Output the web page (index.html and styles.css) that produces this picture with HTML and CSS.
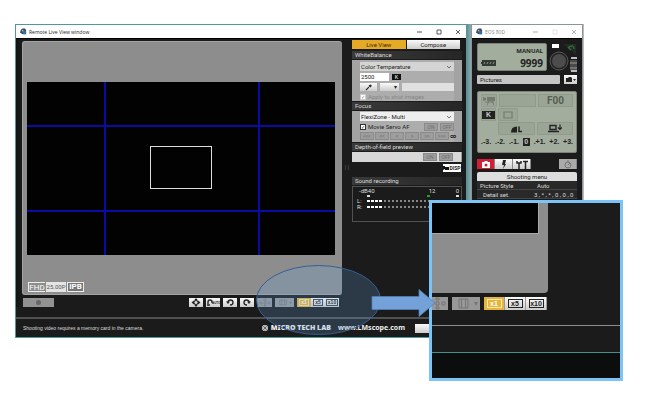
FILE: index.html
```html
<!DOCTYPE html>
<html lang="en">
<head>
<meta charset="utf-8">
<title>Remote Live View window</title>
<link rel="stylesheet" href="styles.css">
</head>
<body>
<main class="desktop">
  <div class="wallpaper"></div>

  <section class="window live">
    <header class="titlebar">
      <svg class="app-icon" viewBox="0 0 8 8"><path d="M1 2L3 .5H6L7 3V7H3L0 5Z" fill="#3c4654"/><circle cx="5" cy="5" r="2" fill="#2876ba"/><circle cx="3" cy="3" r="1" fill="#aab4c0"/></svg>
      <span class="caption">Remote Live View window</span>
      <svg class="controls" viewBox="0 0 44 8"><path d="M0 4H5M20 2H24V6H20ZM39 2L43 6M43 2L39 6" fill="none" stroke="#333" stroke-width=".8"/></svg>
    </header>
    <div class="workspace">
      <div class="left">
        <div class="viewer">
          <div class="picture">
            <i class="grid-v first"></i><i class="grid-v last"></i><i class="grid-h first"></i><i class="grid-h last"></i>
            <i class="focus-frame"></i>
          </div>
          <div class="badges"><span class="fhd">FHD</span><span class="rate">25.00P</span><span class="ipb">IPB</span></div>
        </div>
        <div class="toolbar">
          <button class="record" aria-label="Record"><i class="dot"></i></button>
          <button class="tool" aria-label="Move"><svg viewBox="0 0 14 9"><path d="M7 0L5 2.500H9ZM7 9L5 6.500H9ZM2.500 4.500L5 2.500V6.500ZM11.500 4.500L9 2.500V6.500Z" fill="#222"/><circle cx="7" cy="4.500" r="2" fill="#ddd" stroke="#222"/></svg></button>
          <button class="tool" aria-label="Auto rotate"><svg viewBox="0 0 14 9"><path d="M2 6V4Q2 2 4 2Q6 2 6 4V5M1 7H4" fill="none" stroke="#222" stroke-width="1.400"/></svg><span class="auto">AUTO</span></button>
          <button class="tool" aria-label="Rotate left"><svg viewBox="0 0 14 9"><path d="M5 4Q5 2 7.500 2Q10 2 10 4.500Q10 7 7 7" fill="none" stroke="#222" stroke-width="1.300"/><path d="M3 3.500H7L5 6Z" fill="#222"/></svg></button>
          <button class="tool" aria-label="Rotate right"><svg viewBox="0 0 14 9"><path d="M9 4Q9 2 6.500 2Q4 2 4 4.500Q4 7 7 7" fill="none" stroke="#222" stroke-width="1.300"/><path d="M11 3.500H7L9 6Z" fill="#222"/></svg></button>
          <button class="tool off points-btn" aria-label="Focus points"><svg viewBox="0 0 14 9"><path d="M6 1H8V3H6ZM6 4H8V6H6ZM6 7H8V8H6ZM2 4H4V6H2ZM10 4H12V6H10Z" fill="none" stroke="#777" stroke-width=".7"/></svg></button>
          <button class="tool off wide" aria-label="Aspect"><svg viewBox="0 0 20 9"><path d="M5 2H12V7H5ZM7 2V7M10 2V7" fill="none" stroke="#777" stroke-width=".8"/><path d="M15 4H18L16.500 6Z" fill="#777"/></svg></button>
          <div class="zoomset"><button class="z on"><span>x1</span></button><button class="z"><span>x5</span></button><button class="z"><span>x10</span></button></div>
        </div>
      </div>
      <i class="grip"></i>
      <div class="side">
        <nav class="tabs"><button class="tab active">Live View</button><button class="tab">Compose</button></nav>
        <h2 class="heading">WhiteBalance</h2>
        <div class="panel wb">
          <div class="dropdown"><select aria-label="White balance mode"><option>Color Temperature</option></select><svg viewBox="0 0 6 4"><path d="M1 1L3 3L5 1" fill="none" stroke="#555" stroke-width=".8"/></svg></div>
          <div class="line"><input class="kelvin" aria-label="Kelvin" value="2500"><span class="k">K</span></div>
          <div class="line"><button class="pick" aria-label="Pick colour"><svg viewBox="0 0 8 8"><path d="M1 7L4.500 3.500" stroke="#222" stroke-width="1.300"/><path d="M4 2L6 4L7.500 2.500Q8 .5 6 .5Z" fill="#222"/></svg></button><button class="arrow-btn" aria-label="Colour menu">▾</button><i class="swatch"></i></div>
          <label class="check dim"><input type="checkbox" checked disabled>Apply to shot images</label>
        </div>
        <h2 class="heading">Focus</h2>
        <div class="panel focus">
          <div class="dropdown"><select aria-label="Focus mode"><option>FlexiZone - Multi</option></select><svg viewBox="0 0 6 4"><path d="M1 1L3 3L5 1" fill="none" stroke="#555" stroke-width=".8"/></svg></div>
          <div class="line between"><label class="check"><input type="checkbox" checked>Movie Servo AF</label><span class="onoff"><button disabled>ON</button><button disabled>OFF</button></span></div>
          <div class="steps"><button disabled>&lt;&lt;&lt;</button><button disabled>&lt;&lt;</button><button disabled>&lt;</button><button disabled>&gt;</button><button disabled>&gt;&gt;</button><button disabled>&gt;&gt;&gt;</button><span>∞</span></div>
        </div>
        <h2 class="heading">Depth-of-field preview</h2>
        <div class="dof"><span class="onoff"><button disabled>ON</button><button disabled>OFF</button></span></div>
        <button class="disp"><svg viewBox="0 0 6 5"><path d="M0 0H2V1H6V4H2V3L0 4Z" fill="#111"/></svg>DISP</button>
        <h2 class="heading sound">Sound recording</h2>
        <div class="meter">
          <div class="scale"><span>-dB40</span><span class="mid">12</span><span>0</span></div>
          <div class="marks"><i></i><i class="green"></i><i></i></div>
          <div class="level"><span>L:</span><i class="dots lit"></i><i class="dots"></i></div>
          <div class="level"><span>R:</span><i class="dots lit"></i><i class="dots"></i></div>
        </div>
      </div>
    </div>
    <footer class="status">
      <span>Shooting video requires a memory card in the camera.</span>
      <span class="brand"><svg viewBox="0 0 8 8"><circle cx="4" cy="4" r="3" fill="#eee"/><path d="M4 1V7M1 4H7M2 2L6 6M6 2L2 6" stroke="#444" stroke-width=".6"/></svg><b>MICRO TECH LAB</b><a href="#">www.LMscope.com</a></span>
      <button class="quit" aria-label="Quit"></button>
    </footer>
  </section>

  <section class="window camera">
    <header class="titlebar">
      <svg class="app-icon" viewBox="0 0 8 8"><path d="M1 2L3 .5H6L7 3V7H3L0 5Z" fill="#3c4654"/><circle cx="5" cy="5" r="2" fill="#2876ba"/><circle cx="3" cy="3" r="1" fill="#aab4c0"/></svg>
      <span class="caption faded">EOS 80D</span>
      <svg class="controls" viewBox="0 0 44 8"><path d="M0 4H5M39 2L43 6M43 2L39 6" fill="none" stroke="#999" stroke-width=".8"/><path d="M20 2H24V6H20Z" fill="none" stroke="#ddd" stroke-width=".8"/></svg>
    </header>
    <div class="cambody">
      <div class="top">
        <div class="lcd small"><span>MANUAL</span><div><svg class="battery" viewBox="0 0 15 6"><path d="M1 2H0V4H1V6H15V0H1Z" fill="#333a33"/><path d="M3 4L4 2M6 4L7 2M9 4L10 2M12 4L13 2" stroke="#a3ab98" stroke-width=".8"/></svg><b>9999</b></div></div>
        <svg class="dial" viewBox="0 0 30 30"><path d="M5 1H12V5H5Z" fill="#fff"/><circle cx="12" cy="18" r="9" fill="#222" stroke="#666" stroke-width=".8"/><circle cx="12" cy="18" r="7" fill="#4c4c4c"/><path d="M16 1H29V12Z" fill="#242924"/><path d="M22 4Q27 1 27 6M21 4L24 7" fill="none" stroke="#287a38" stroke-width="1.300"/><path d="M23 17H30V28H23Z" fill="#4a4a4a"/><path d="M23 20H30M23 25H30" stroke="#999"/><path d="M24 14H30V16H24ZM24 27H30V29H24Z" fill="#bbb"/></svg>
      </div>
      <div class="dest"><button class="folder">Pictures</button><button class="cam-btn" aria-label="Capture target"><svg viewBox="0 0 13 9"><path d="M2 3H4L5 2H7L8 3V7H2Z" fill="#222"/><path d="M9 4H12L10.500 6Z" fill="#222"/></svg></button></div>
      <div class="lcd large">
        <div class="cells three"><span><svg viewBox="0 0 14 10"><path d="M5 1H13V5H5ZM1 1L4 2V4L1 5Z" fill="#737b6e"/><path d="M7 5L5 9M10 5L12 9M3 6H12" stroke="#737b6e"/></svg></span><span class="wide"></span><span class="fnum">F00</span></div>
        <div class="cells two"><span><em>K</em></span><span><svg viewBox="0 0 14 10"><path d="M3 2H11V8H3Z" fill="none" stroke="#747d6f" stroke-width="1.200"/></svg></span></div>
        <div class="cells quality"><span><svg viewBox="0 0 14 9"><path d="M2 8Q2 2 8 2V8Z" fill="#222"/><path d="M10 2V7H13" fill="none" stroke="#222" stroke-width="1.500"/></svg></span><span><svg viewBox="0 0 14 9"><path d="M2 1H8V5H2ZM0 7H11" fill="none" stroke="#222" stroke-width="1.400"/><path d="M12 0V4M10 3L12 5L14 3" fill="none" stroke="#222" stroke-width="1.200"/></svg></span></div>
        <div class="ev"><span>.-3.</span><span>.-2.</span><span>.-1.</span><em>0</em><span>.+1.</span><span>+2.</span><span>+3.</span></div>
      </div>
      <div class="camtabs">
        <button class="red" aria-label="Shooting"><svg viewBox="0 0 14 9"><path d="M3 2H5L6 1H8L9 2H11V8H3Z" fill="#fff"/><circle cx="7" cy="5" r="1.500" fill="#d12035"/></svg></button>
        <button aria-label="Flash"><svg viewBox="0 0 14 9"><path d="M6 0H9L8 4H9L6 9L7 5H5Z" fill="#222"/></svg></button>
        <button aria-label="Set-up"><svg viewBox="0 0 14 9"><path d="M2 1V3H6V1M4 3V9M8 1.500H13M10.500 1V9" fill="none" stroke="#222" stroke-width="1.500"/></svg></button>
        <button class="timer" aria-label="Timer"><svg viewBox="0 0 14 9"><circle cx="7" cy="5" r="3" fill="none" stroke="#777"/><path d="M7 0V2M7 5L9 3" stroke="#777"/></svg></button>
      </div>
      <div class="menu-title">Shooting menu</div>
      <dl class="menu"><div><dt>Picture Style</dt><dd>Auto</dd></div><div class="sub"><dt>Detail set.</dt><dd class="wide">3 , * , * , 0 , 0 , 0</dd></div></dl>
    </div>
  </section>

  <section class="inset">
    <div class="crop"><div class="black"></div></div>
    <div class="inset-tools">
      <button class="off points" aria-label="Focus points"><svg viewBox="0 0 16 13"><path d="M4 1H7V3H4ZM4 5H7V8H4ZM4 10H7V12H4ZM10 5H13V8H10Z" fill="none" stroke="#757575"/></svg></button>
      <button class="off aspect" aria-label="Aspect"><svg viewBox="0 0 28 13"><path d="M7 2H16V11H7ZM9.500 2V11M13.500 2V11" fill="none" stroke="#757575"/><path d="M22 5H26L24 9Z" fill="#757575"/></svg></button>
      <button class="big on"><span>x1</span></button><button class="big"><span>x5</span></button><button class="big"><span>x10</span></button>
    </div>
    <div class="foot"></div>
    <div class="under"></div>
  </section>

  <svg class="callout" viewBox="0 0 180 72"><ellipse cx="62.500" cy="36" rx="62" ry="34.500" fill="#6aa4e0" fill-opacity=".22" stroke="#365f91" stroke-width="1"/><path d="M116 32.500H163V25.500L179 39L163 52.500V45.500H116Z" fill="#74a2d8" stroke="#527fb5" stroke-width=".8"/></svg>
</main>
</body>
</html>
```
FILE: styles.css
```css
* { box-sizing: border-box; }
body { margin: 0; background: #fff; font: 6px/8px Roboto, "Liberation Sans", sans-serif; color: #222; }
button, input, select { font: inherit; color: inherit; margin: 0; padding: 0; border: 0; border-radius: 0; }
button { display: flex; align-items: center; justify-content: center; background: linear-gradient(#fafafa, #ccc); overflow: hidden; }
button svg { width: 14px; height: 9px; flex: none; }
i { display: block; font-style: normal; }
em { font-style: normal; }
.desktop { position: relative; min-height: 404px; overflow: hidden; }
.wallpaper { position: absolute; right: 66px; top: 24px; width: 119px; height: 180px; background: linear-gradient(90deg, #477d82, #86a5aa 5px, #bbb); }

/* Windows */
.window { position: absolute; top: 24px; background: #1b1b1b; border: 1px solid #50999b; }
.live { left: 15px; right: 183px; }
.camera { right: 67px; width: 112px; height: 181px; border-color: #8b9698; overflow: hidden; }
.titlebar { display: flex; align-items: center; height: 13px; padding: 0 3px 0 4px; background: #fff; font: 5px/12px "Open Sans", sans-serif; }
.app-icon { width: 7px; height: 7px; margin-right: 2px; }
.caption { flex: 1; white-space: nowrap; }
.faded { color: #888; }
.controls { width: 44px; height: 8px; margin-right: 2px; }
.workspace { position: relative; display: grid; grid-template-columns: 1fr 110px; gap: 10px; padding: 2px 4px 0 6px; border-top: 1px solid #000; background: linear-gradient(90deg, #111, #1b1b1b 5px); }

/* Viewer */
.viewer { height: 254px; padding: 40px 7px 0 4px; background: #8d8d8d; border: 1px solid #a3a3a3; border-width: 1px 0 1px 1px; border-radius: 3px; }
.picture { position: relative; height: 173px; background: #020202; }
.grid-v, .grid-h, .focus-frame { position: absolute; background: #0a0aa5; }
.grid-v { top: 0; bottom: 0; width: 2px; }
.grid-h { left: 0; right: 0; height: 2px; }
.grid-v.first { left: 25%; }
.grid-v.last { left: 75%; }
.grid-h.first { top: 25%; }
.grid-h.last { top: 74%; }
.focus-frame { left: 40%; right: 40%; top: 37%; bottom: 38%; background: none; border: 1px solid #ddd; }
.badges { display: flex; align-items: center; gap: 1px; margin: 27px 0 0 1px; height: 10px; color: #555; }
.badges span { height: 10px; overflow: hidden; line-height: 10px; text-align: center; }
.badges .fhd { width: 17px; border: 1px solid #eee; border-right: 0; color: #fff; font-size: 8px; }
.badges .rate { width: 20px; background: #e4e4e4; }
.badges .ipb { width: 17px; border: 1px solid #eee; color: #fff; background: #777; font: bold 8px/8px Roboto, sans-serif; }

/* Viewer toolbar */
.toolbar { display: flex; gap: 3px; height: 9px; margin-top: 3px; padding-right: 3px; }
.record { width: 31px; margin: 0 auto 0 1px; background: #929292; }
.dot { width: 5px; height: 5px; border-radius: 50%; background: #666; }
.tool { width: 14px; position: relative; }
.off { background: #989898; }
.points-btn { width: 15px; }
.wide { width: 19px; }
.tool.wide svg { width: 19px; }
.auto { position: absolute; left: 6px; top: 3px; font: bold 3px/4px "Liberation Sans", sans-serif; }
.zoomset { display: flex; }
.z { width: 14px; }
.z span { border: 1px solid #444; padding: 0 1px; font: bold 5px/5px "Liberation Sans", sans-serif; }
.on { background: #e5b43a; color: #fff; }
.z.on span { border-color: #f8dfa0; }

/* Settings column */
.grip { position: absolute; right: 117px; top: 126px; width: 4px; height: 5px; border: solid #3a3a3a; border-width: 0 1px; }
.tabs { display: grid; grid-template-columns: 1fr 1fr; gap: 1px; height: 9px; margin: -1px 2px 2px 0; }
.tab.active { background: #e6aa26; color: #3b2d12; }
.heading { margin: 0 0 1px; height: 8px; padding-left: 3px; font: 6px/8px Roboto, "Liberation Sans", sans-serif; color: #ddd; background: linear-gradient(90deg, #3a3a3a, #262626); }
.panel { display: flex; flex-direction: column; gap: 2px; margin-bottom: 1px; background: #adadad; border-left: 8px solid #a3a3a3; border-right: 8px solid #a3a3a3; }
.wb { height: 41px; padding-top: 2px; }
.focus { height: 31px; padding-top: 1px; gap: 1px; }
.dropdown { position: relative; display: grid; height: 9px; }
.dropdown select { appearance: none; width: 100%; height: 9px; background: #d4d4d4; padding-left: 1px; }
.focus select { background: #eee; }
.dropdown svg { position: absolute; right: 2px; top: 3px; width: 6px; height: 4px; }
.line { display: flex; gap: 3px; height: 8px; align-items: center; }
.kelvin { width: 29px; height: 8px; padding-left: 1px; background: #fff; }
.k { width: 9px; height: 6px; font: bold 5px/6px "Liberation Sans", sans-serif; color: #ccc; background: #111; text-align: center; }
.pick { width: 17px; height: 8px; }
.pick svg { width: 7px; height: 7px; }
.arrow-btn { width: 19px; height: 8px; padding-left: 12px; }
.swatch { flex: 1; height: 8px; background: #e0e0e0; }
.check { display: flex; align-items: center; gap: 2px; white-space: nowrap; height: 8px; }
.check input { appearance: none; display: grid; place-items: center; width: 6px; height: 6px; border: 1px solid #333; background: #fff; }
.check input:checked::after { content: "✓"; font: 5px/4px "DejaVu Sans", sans-serif; }
.dim { color: #868686; }
.dim input { border-color: #ccc; }
.between { justify-content: space-between; height: 9px; }
.onoff { display: flex; gap: 2px; }
.onoff button, .steps button { width: 14px; height: 8px; background: #9d9d9d; border: 1px solid #8a8a8a; color: #6c6c6c; font-size: 5px; line-height: 6px; }
.steps { display: flex; gap: 1px; align-items: center; }
.focus .steps { margin-right: -4px; }
.steps span { font-weight: bold; }
.dof { display: flex; justify-content: flex-end; height: 10px; padding: 1px 8px; background: #d8d8d8; border-right: 1px solid #999; }
.disp { width: 18px; height: 8px; margin: 2px 1px 5px auto; background: #fff; font: bold 5px/7px Roboto, sans-serif; }
.disp svg { width: 6px; height: 5px; }
.meter { height: 36px; padding: 0 2px; border: 1px solid #515151; color: #ddd; }
.scale, .marks { display: flex; justify-content: space-between; height: 8px; padding-left: 4px; }
.scale .mid { margin-left: 34px; }
.marks { height: 3px; padding-left: 12px; }
.marks i { width: 3px; height: 2px; background: #ddd; }
.marks i:nth-child(2) { margin-left: 30px; }
.marks .green { background: #22a322; }
.level { display: flex; align-items: center; gap: 1px; height: 6px; }
.level span { width: 9px; margin-left: 2px; line-height: 6px; }
.dots { flex: 1; height: 2px; background: repeating-linear-gradient(90deg, #888 0 2px, transparent 2px 4px); }
.dots.lit { flex: none; width: 16px; background: repeating-linear-gradient(90deg, #fff 0 3px, transparent 3px 4px); }

/* Status bar */
.status { display: flex; align-items: center; height: 20px; margin-top: 10px; padding: 0 0 0 7px; border-top: 2px solid #505050; color: #ddd; font: 5px/10px "Liberation Sans", sans-serif; white-space: nowrap; }
.brand { display: flex; align-items: center; margin-left: auto; font: bold 7px/8px "Noto Sans", sans-serif; color: #eee; }
.brand svg { width: 8px; height: 8px; margin-right: 2px; }
.brand a { margin-left: 7px; color: inherit; text-decoration: none; }
.quit { width: 51px; height: 9px; margin-left: 10px; }

/* Camera window */
.cambody { padding: 4px 5px 0; border-top: 1px solid #000; }
.top { display: flex; height: 28px; justify-content: space-between; }
.lcd { background: #a3ad9e; border: 1px solid #7b8378; border-radius: 2px; }
.small { width: 70px; padding: 3px 3px 0; text-align: right; font: bold 6px/9px "Open Sans", sans-serif; }
.small div { display: flex; justify-content: space-between; align-items: center; }
.small b { font: bold 10px/14px "Open Sans", sans-serif; }
.battery { width: 15px; height: 6px; }
.dial { width: 30px; height: 30px; }
.dest { display: flex; gap: 4px; height: 9px; margin-top: 4px; }
.folder { flex: 1; justify-content: flex-start; padding-left: 3px; background: #c5c5c5; border-radius: 1px; }
.cam-btn { width: 13px; }
.cam-btn svg { width: 13px; }
.large { height: 62px; margin-top: 7px; padding: 2px 3px; }
.cells { display: flex; gap: 2px; height: 13px; margin-bottom: 1px; }
.cells > span { display: flex; flex: 0 0 15px; align-items: center; justify-content: center; background: #9ba596; border: 1px solid #919b8c; }
.cells svg { width: 14px; height: 10px; }
.cells .wide { flex: 1; }
.cells .fnum { flex: 0 0 35px; color: #555e50; font: bold 10px/10px Roboto, sans-serif; }
.cells em { width: 13px; background: #222; color: #ccc; font: bold 7px/8px "Liberation Sans", sans-serif; text-align: center; }
.two > span:last-child { flex-basis: 20px; }
.quality { padding-left: 17px; }
.quality > span { flex: 1; }
.ev { display: flex; justify-content: space-between; font: bold 7px/12px "Liberation Sans", sans-serif; }
.ev em { width: 7px; height: 8px; margin-top: 2px; line-height: 8px; background: #222; color: #ccc; text-align: center; }
.camtabs { display: flex; height: 10px; margin-top: 6px; }
.camtabs button { width: 18px; border-right: 1px solid #888; }
.camtabs .red { background: #d12035; }
.camtabs .timer { margin-left: auto; background: #aaa; }
.menu-title { height: 9px; margin-top: 3px; background: #ddd; border-radius: 2px 2px 0 0; line-height: 9px; text-align: center; }
.menu { margin: 0; color: #ddd; }
.menu div { display: flex; height: 9px; padding: 0 3px; line-height: 9px; border-bottom: 1px solid #444; background: #292929; }
.menu dt { width: 57px; }
.menu dd { margin: 0; }
.menu .sub { padding-left: 6px; }
.menu .sub dt { width: 51px; }
.menu dd.wide { width: auto; white-space: nowrap; }

/* Magnified detail */
.inset { position: absolute; right: 27px; top: 200px; width: 194px; background: #1b1b1b; border: 3px solid #7cc4f8; }
.crop { width: 116px; height: 90px; background: #8d8d8d; border-radius: 0 0 4px 0; }
.black { width: 107px; height: 31px; background: #020202; border: solid #aaa; border-width: 0 1px 1px 0; }
.inset-tools { display: flex; height: 13px; margin-top: 4px; }
.points { width: 16px; margin-right: 4px; }
.aspect { width: 28px; margin-right: 4px; }
.points svg { width: 16px; height: 13px; }
.aspect svg { width: 28px; height: 13px; }
.big { width: 21px; border-right: 1px solid #999; font: bold 7px/7px "Liberation Sans", sans-serif; }
.big span { width: 15px; height: 9px; border: 1px solid #222; text-align: center; }
.big.on span { border-color: #fbe9b7; }
.foot { height: 28px; margin-top: 15px; border: solid #8d8d8d; border-width: 1px 0; border-bottom-color: #3f908e; }
.under { height: 25px; background: #0c0d0d; }

.callout { position: absolute; right: 214px; top: 264px; width: 180px; height: 72px; }
```
